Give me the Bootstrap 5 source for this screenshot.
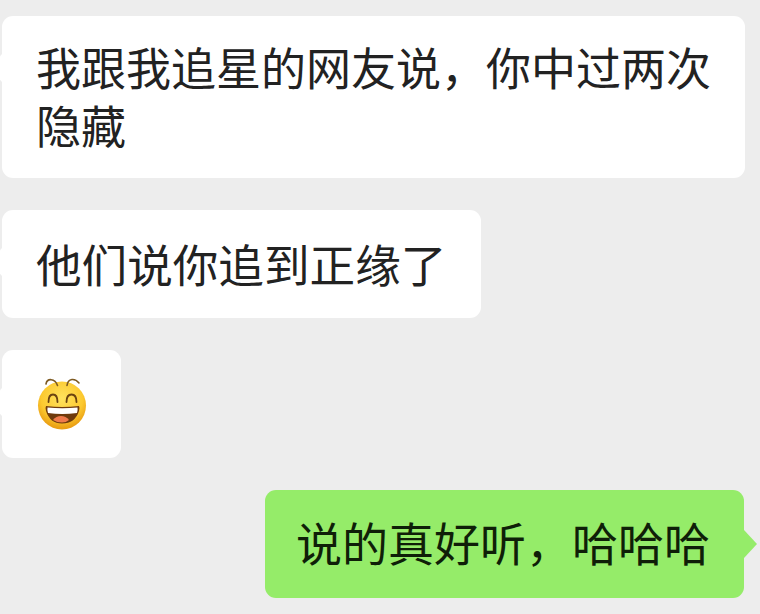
<!DOCTYPE html>
<html lang="zh-CN">
<head>
    <meta charset="UTF-8">
    <title>Chat</title>
    <meta name="viewport" content="width=device-width, initial-scale=1">
    <link href="https://cdn.jsdelivr.net/npm/bootstrap@5.3.0/dist/css/bootstrap.min.css" rel="stylesheet">
    <style>
        body {
            background: #ededed;
            font-family: "Liberation Sans", "Noto Sans CJK SC", sans-serif;
            overflow: hidden;
        }
        .chat-wrap {
            height: 614px;
            padding: 16px 16px 0 2px;
            gap: 32px;
        }
        .bubble {
            position: relative;
            border-radius: 11px;
            line-height: 58px;
            color: #222;
        }
        .bubble-in { background: #fff; }
        .bubble-in::before {
            content: "";
            position: absolute;
            left: -13px;
            top: 38px;
            border-top: 14px solid transparent;
            border-bottom: 14px solid transparent;
            border-right: 13px solid #fff;
        }
        .bubble-out {
            background: #95ec69;
            color: #0f1f08;
            font-size: 46px;
            padding: 26px 34px 24px 31px;
        }
        .bubble-out::after {
            content: "";
            position: absolute;
            right: -13px;
            top: 40px;
            border-top: 14px solid transparent;
            border-bottom: 14px solid transparent;
            border-left: 13px solid #95ec69;
        }
        .first-msg {
            width: 743px;
            font-size: 45px;
            padding: 26px 34px 20px 34px;
        }
        .second-msg {
            font-size: 45.6px;
            padding: 29px 35px 21px 34px;
        }
        .emoji-cell {
            padding: 29px 34px 27px 35px;
        }
        .emoji-cell svg { display: block; overflow: visible; }
    </style>
</head>
<body>

<div class="chat-wrap d-flex flex-column">
    <div class="bubble bubble-in first-msg">我跟我追星的网友说，你中过两次隐藏</div>
    <div class="bubble bubble-in second-msg align-self-start text-nowrap">他们说你追到正缘了</div>
    <div class="bubble bubble-in emoji-cell align-self-start">
        <svg width="50" height="52" viewBox="0 0 50 52">
            <defs>
                <radialGradient id="face" cx="50%" cy="35%" r="62%">
                    <stop offset="0" stop-color="#ffe25e"/>
                    <stop offset="0.7" stop-color="#fcc92f"/>
                    <stop offset="1" stop-color="#ea9f14"/>
                </radialGradient>
            </defs>
            <circle cx="25" cy="26.500" r="24" fill="url(#face)"/>
            <path d="M9 5 C10 -1 18 -1 20.500 6.500 M30 6.500 C31 -1 38 -1 42 4" fill="none" stroke="#7d5a22" stroke-width="1.6" stroke-linecap="round"/>
            <path d="M11.500 23 Q11.500 15.500 16 15.500 Q20.500 15.500 20.500 23 M29.500 23 Q29.500 15.500 34.500 15.500 Q39.500 15.500 39.500 23" fill="none" stroke="#6b4310" stroke-width="1.8" stroke-linecap="round"/>
            <path d="M9 27 Q25 29 42 27 Q43 29 42 32 Q38 44.500 25 44.500 Q13 44.500 9 32 Q8 29 9 27 Z" fill="#6e3a0c"/>
            <path d="M10.500 28.500 Q25 30 40.500 28.500 Q41 31 40 34 Q25 36 11 34 Q10 31 10.500 28.500 Z" fill="#fff"/>
            <path d="M16 41 Q19 37 24 37 Q29 37 32 41 Q29 43.500 25 43.500 Q20 43.500 16 41 Z" fill="#ef7a4b"/>
        </svg>
    </div>
    <div class="bubble bubble-out align-self-end text-nowrap">说的真好听，哈哈哈</div>
</div>

</body>
</html>
